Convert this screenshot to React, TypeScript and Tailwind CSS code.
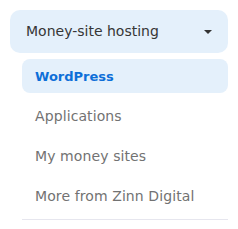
import React from "react";

export default function App() {
  const items = ["Applications", "My money sites", "More from Zinn Digital"];
  return (
    <div className="w-[238px] h-[229px] bg-white p-[10px]" style={{ fontFamily: "'DejaVu Sans', sans-serif" }}>
      <div className="h-[43px] rounded-[10px] bg-[#e4f0fb] flex items-center justify-between pl-[16px] pr-[16px]">
        <span className="text-[14px] text-[#363636]">Money-site hosting</span>
        <svg width="8" height="4" viewBox="0 0 8 4"><path d="M0 0h8L4 4z" fill="#333" /></svg>
      </div>
      <div className="ml-[12px] mt-[6px] flex flex-col">
        <div className="h-[34px] rounded-[8px] bg-[#e4f0fb] flex items-center pl-[13px] pt-[1px] text-[13px] font-bold text-[#0d6fd8]">WordPress</div>
        <div className="mt-[3px] flex flex-col">
          {items.map((t) => (
            <div key={t} className="h-[40px] flex items-center pl-[13px] text-[14px] tracking-[0.1px] text-[#727272]">{t}</div>
          ))}
        </div>
        <div className="mt-[3px] border-t border-[#e6e6ee]" />
      </div>
    </div>
  );
}
